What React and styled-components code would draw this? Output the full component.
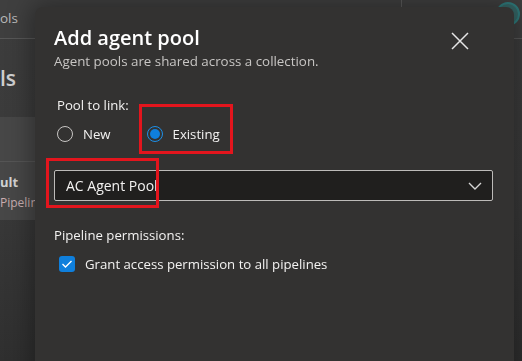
import React from "react";
import styled, { createGlobalStyle } from "styled-components";

const Global = createGlobalStyle`
  html, body { margin: 0; padding: 0; }
  body {
    width: 522px; height: 361px; overflow: hidden;
    background: #383838;
    font-family: "Open Sans", "Noto Sans", sans-serif;
  }
  #root { width: 522px; height: 361px; }
`;

const Page = styled.div`
  width: 522px;
  height: 361px;
  display: flex;
  flex-direction: column;
  background: linear-gradient(#3d3d3d, #3a3a3a 50%, #2f2f2f);
  overflow: hidden;
`;

const TopBar = styled.div`
  height: 38px;
  flex: none;
  display: flex;
  align-items: center;
  border-bottom: 1px solid #575757;
  background: #3f3f3f;
`;

const Crumb = styled.span`
  font-size: 13.5px;
  color: #b9b9b9;
  margin-top: -2px;
`;

const TopRight = styled.div`
  margin-left: auto;
  height: 100%;
  display: flex;
  align-items: flex-start;
`;

const VDivider = styled.div`
  width: 1px;
  height: 100%;
  background: #5a5a5a;
  margin-right: 94px;
`;

const Avatar = styled.div`
  width: 24px;
  height: 24px;
  border-radius: 50%;
  border: 2px solid #2f7a7b;
  background: #356565;
  margin-top: 2px;
  margin-right: 2px;
  box-sizing: border-box;
`;

const Body = styled.div`
  flex: 1;
  display: flex;
  flex-direction: column;
`;

const BigTitle = styled.div`
  font-size: 21px;
  font-weight: 600;
  color: #cfcfcf;
  height: 78px;
  display: flex;
  align-items: center;
`;

const Card = styled.div`
  width: 110px;
  background: #474747;
  display: flex;
  flex-direction: column;
`;

const CardRow = styled.div`
  height: ${p => p.$h}px;
  border-bottom: ${p => (p.$line ? "1px solid #555" : "none")};
  display: flex;
  flex-direction: column;
  justify-content: center;
  gap: 3px;
  padding-top: ${p => p.$pt || 0}px;
  box-sizing: border-box;
`;

const CardName = styled.span`
  font-size: 13px;
  font-weight: 700;
  color: #d2d2d2;
`;

const CardSub = styled.span`
  font-size: 12px;
  color: #c9aeb0;
`;

const Dialog = styled.div`
  position: fixed;
  left: 35px;
  top: 7px;
  width: 479px;
  height: 380px;
  background: #333231;
  border-radius: 8px;
  box-shadow: 0 0 24px 4px rgba(0, 0, 0, 0.35);
  padding: 18px 21px 0 19px;
  box-sizing: border-box;
  display: flex;
  flex-direction: column;
  color: #f3f2f1;
`;

const Header = styled.div`
  display: flex;
  align-items: flex-start;
  justify-content: space-between;
`;

const HeadText = styled.div`
  display: flex;
  flex-direction: column;
`;

const Title = styled.h1`
  margin: 0;
  font-size: 20px;
  line-height: 26px;
  font-weight: 600;
  color: #ffffff;
`;

const Subtitle = styled.p`
  margin: 1px 0 0;
  font-size: 13.35px;
  line-height: 18px;
  color: #c8c6c4;
`;

const CloseBtn = styled.button`
  width: 32px;
  height: 32px;
  margin-top: 0;
  margin-right: 17px;
  padding: 0;
  border: none;
  background: transparent;
  display: flex;
  align-items: center;
  justify-content: center;
  color: #e6e6e6;
`;

const Label = styled.div`
  font-size: 13.2px;
  line-height: 20px;
  color: #f3f2f1;
  margin-top: ${p => p.$mt}px;
  margin-left: ${p => p.$ml || 0}px;
`;

const RadioGroup = styled.div`
  display: flex;
  gap: 36px;
  margin-top: 9px;
  margin-left: 3px;
`;

const RadioOption = styled.label`
  display: flex;
  align-items: center;
  gap: 10px;
  font-size: 13.2px;
  color: #f3f2f1;
  height: 20px;
`;

const RadioCircle = styled.span`
  width: 16px;
  height: 16px;
  border-radius: 50%;
  box-sizing: border-box;
  border: 1px solid ${p => (p.$on ? "#1d8fe6" : "#c8c6c4")};
  display: flex;
  align-items: center;
  justify-content: center;
  &::after {
    content: "";
    width: 10px;
    height: 10px;
    border-radius: 50%;
    background: ${p => (p.$on ? "#0f7fdc" : "transparent")};
  }
`;

const Select = styled.div`
  margin-top: 26px;
  height: 31px;
  box-sizing: border-box;
  border: 1px solid #bdbbb9;
  border-radius: 2px;
  background: #201f1e;
  display: flex;
  align-items: center;
  padding: 0 10px 0 11px;
  font-size: 14px;
  color: #f3f2f1;
`;

const SelectText = styled.span`
  flex: 1;
`;

const CheckRow = styled.div`
  display: flex;
  align-items: center;
  gap: 10px;
  margin-top: 10px;
  margin-left: 5px;
  font-size: 13.2px;
  color: #f3f2f1;
`;

const CheckBox = styled.span`
  width: 16px;
  height: 16px;
  border-radius: 3px;
  background: #0f7fdc;
  display: flex;
  align-items: center;
  justify-content: center;
`;

const Annotation = styled.div`
  position: absolute;
  border: 3px solid #e3151d;
  box-sizing: border-box;
  left: ${p => p.$x}px;
  top: ${p => p.$y}px;
  width: ${p => p.$w}px;
  height: ${p => p.$h}px;
`;

export default function App() {
  return (
    <>
      <Global />
      <Page>
        <TopBar>
          <Crumb>ols</Crumb>
          <TopRight>
            <VDivider />
            <Avatar />
          </TopRight>
        </TopBar>
        <Body>
          <BigTitle>ls</BigTitle>
          <Card>
            <CardRow $h={45} $line />
            <CardRow $h={58} $pt={2}>
              <CardName>ult</CardName>
              <CardSub>Pipelin</CardSub>
            </CardRow>
          </Card>
        </Body>
      </Page>
      <Dialog>
        <Header>
          <HeadText>
            <Title>Add agent pool</Title>
            <Subtitle>Agent pools are shared across a collection.</Subtitle>
          </HeadText>
          <CloseBtn aria-label="Close">
            <svg width="18" height="18" viewBox="0 0 18 18">
              <path d="M1 1 L17 17 M17 1 L1 17" stroke="currentColor" strokeWidth="1.5" fill="none" />
            </svg>
          </CloseBtn>
        </Header>
        <Label $mt={25} $ml={3}>Pool to link:</Label>
        <RadioGroup>
          <RadioOption>
            <RadioCircle />
            New
          </RadioOption>
          <RadioOption>
            <RadioCircle $on />
            Existing
          </RadioOption>
        </RadioGroup>
        <Select>
          <SelectText>AC Agent Pool</SelectText>
          <svg width="14" height="8" viewBox="0 0 14 8">
            <path d="M1 1 L7 7 L13 1" stroke="#d6d6d6" strokeWidth="1.4" fill="none" />
          </svg>
        </Select>
        <Label $mt={24}>Pipeline permissions:</Label>
        <CheckRow>
          <CheckBox>
            <svg width="12" height="10" viewBox="0 0 12 10">
              <path d="M1.5 5 L4.5 8 L10.5 2" stroke="#fff" strokeWidth="1.4" fill="none" />
            </svg>
          </CheckBox>
          Grant access permission to all pipelines
        </CheckRow>
        <Annotation $x={104} $y={97} $w={94} $h={50} />
        <Annotation $x={11} $y={151} $w={113} $h={50} />
      </Dialog>
    </>
  );
}
